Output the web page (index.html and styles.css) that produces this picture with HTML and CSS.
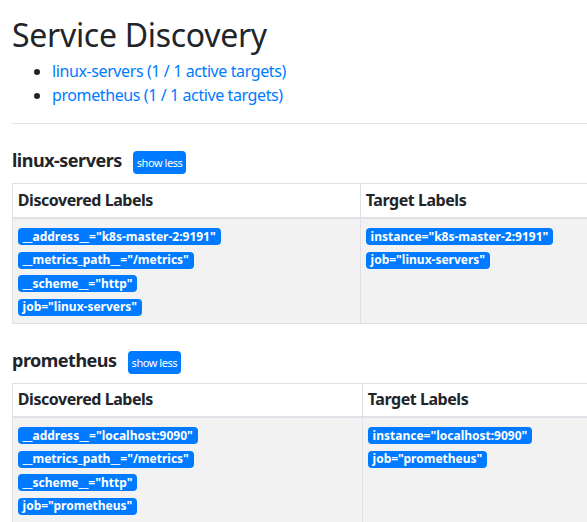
FILE: index.html
```html
<!DOCTYPE html>
<html>
<head>
<meta charset="utf-8">
<link rel="stylesheet" href="styles.css">
</head>
<body>
<div class="page">
  <h2 class="title">Service Discovery</h2>
  <ul class="jobs">
    <li><a href="#linux-servers">linux-servers (1 / 1 active targets)</a></li>
    <li><a href="#prometheus">prometheus (1 / 1 active targets)</a></li>
  </ul>
  <hr class="rule">

  <section class="pool">
    <div class="pool-head">
      <h3 class="pool-name">linux-servers</h3>
      <button class="btn-less">show less</button>
    </div>
    <table class="labels">
      <colgroup><col class="col-a"><col class="col-b"></colgroup>
      <thead>
        <tr><th>Discovered Labels</th><th>Target Labels</th></tr>
      </thead>
      <tbody>
        <tr>
          <td>
            <div class="line"><span class="badge">__address__="k8s-master-2:9191"</span></div>
            <div class="line"><span class="badge">__metrics_path__="/metrics"</span></div>
            <div class="line"><span class="badge">__scheme__="http"</span></div>
            <div class="line"><span class="badge">job="linux-servers"</span></div>
          </td>
          <td>
            <div class="line"><span class="badge">instance="k8s-master-2:9191"</span></div>
            <div class="line"><span class="badge">job="linux-servers"</span></div>
          </td>
        </tr>
      </tbody>
    </table>
  </section>

  <section class="pool">
    <div class="pool-head">
      <h3 class="pool-name">prometheus</h3>
      <button class="btn-less">show less</button>
    </div>
    <table class="labels">
      <colgroup><col class="col-a2"><col class="col-b"></colgroup>
      <thead>
        <tr><th>Discovered Labels</th><th>Target Labels</th></tr>
      </thead>
      <tbody>
        <tr>
          <td>
            <div class="line"><span class="badge">__address__="localhost:9090"</span></div>
            <div class="line"><span class="badge">__metrics_path__="/metrics"</span></div>
            <div class="line"><span class="badge">__scheme__="http"</span></div>
            <div class="line"><span class="badge">job="prometheus"</span></div>
          </td>
          <td>
            <div class="line"><span class="badge">instance="localhost:9090"</span></div>
            <div class="line"><span class="badge">job="prometheus"</span></div>
          </td>
        </tr>
      </tbody>
    </table>
  </section>
</div>
</body>
</html>
```

FILE: styles.css
```css
html, body {
  margin: 0;
  padding: 0;
  background: #fff;
  overflow: hidden;
}
body {
  font-family: "Noto Sans", "Open Sans", sans-serif;
  font-size: 16px;
  line-height: 1.5;
  color: #212529;
}
.page {
  padding: 16px 0 0 12px;
  width: 900px;
}
.title {
  margin: 0 0 5px 0;
  font-size: 32px;
  font-weight: 400;
  line-height: 1.2;
  letter-spacing: -0.3px;
}
.jobs {
  margin: 0 0 16px 0;
  padding-left: 40px;
}
.jobs a {
  color: #007bff;
  text-decoration: none;
  letter-spacing: -0.4px;
}
.rule {
  margin: 0;
  border: 0;
  border-top: 1px solid rgba(0,0,0,.1);
  width: 580px;
}
.pool {
  margin-top: 26px;
}
.pool-head {
  display: flex;
  align-items: baseline;
  gap: 11px;
  margin-bottom: 9px;
}
.pool-name {
  margin: 0;
  font-size: 18px;
  font-weight: 700;
  line-height: 1.2;
  letter-spacing: -0.5px;
}
.btn-less {
  font-family: inherit;
  font-size: 11px;
  height: 23px;
  line-height: 23px;
  letter-spacing: -0.45px;
  padding: 0 4px;
  color: #fff;
  background: #007bff;
  border: 0;
  border-radius: 4px;
}
.labels {
  border-collapse: collapse;
  width: 800px;
  margin-bottom: 15px;
}
.col-a { width: 348px; }
.col-a2 { width: 350px; }
.labels th, .labels td {
  border: 1px solid #dee2e6;
  padding: 4.8px;
  text-align: left;
  vertical-align: top;
}
.labels th {
  font-weight: 700;
  line-height: 23px;
  letter-spacing: -0.45px;
  border-bottom: 2px solid #dee2e6;
}
.labels tbody tr {
  background: #f2f2f2;
}
.line {
  line-height: 23.5px;
}
.badge {
  display: inline-block;
  font-size: 12px;
  font-weight: 700;
  line-height: 1;
  padding: 2.5px 4.8px;
  color: #fff;
  background: #007bff;
  border-radius: 4px;
  vertical-align: middle;
}
```
